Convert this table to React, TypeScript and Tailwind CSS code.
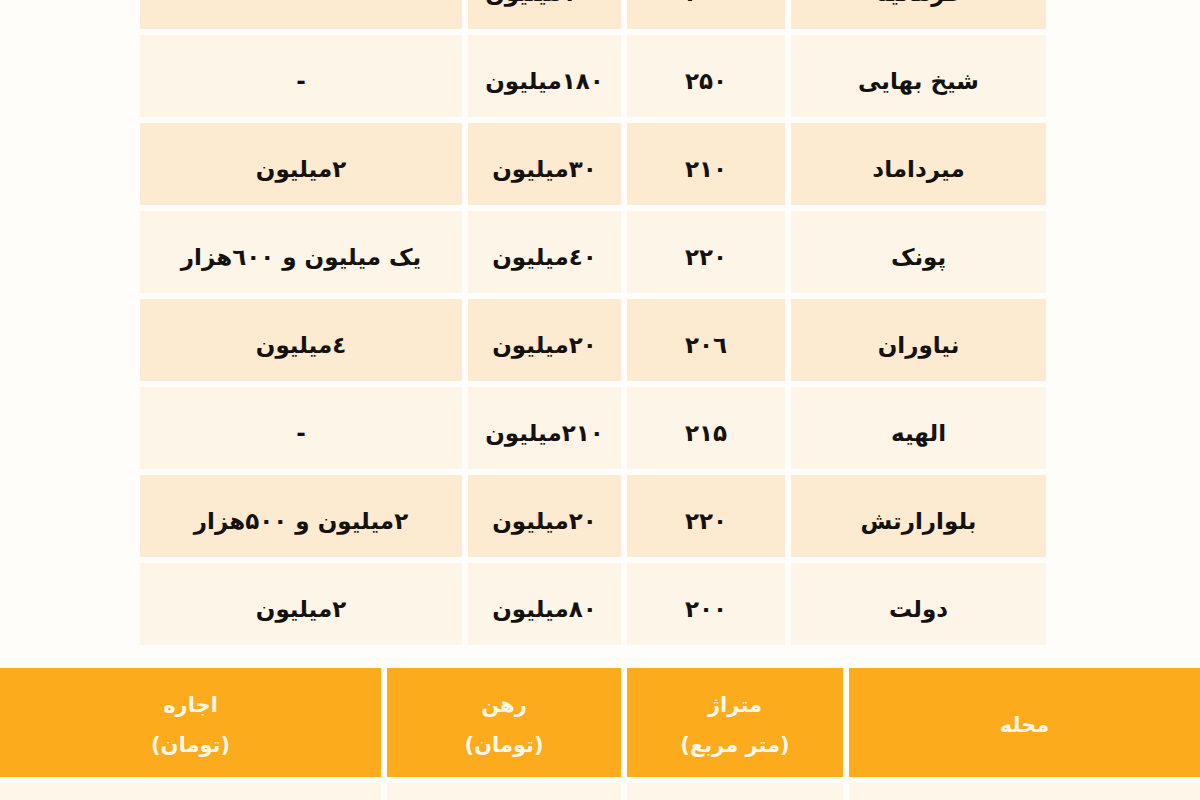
import React from 'react';

const rows = [
  { area: 'فرمانیه', size: '۳۰۰', deposit: '۱۰۰میلیون', rent: '-' },
  { area: 'شیخ بهایی', size: '۲۵۰', deposit: '۱۸۰میلیون', rent: '-' },
  { area: 'میرداماد', size: '۲۱۰', deposit: '۳۰میلیون', rent: '۲میلیون' },
  { area: 'پونک', size: '۲۲۰', deposit: '٤۰میلیون', rent: 'یک میلیون و ٦۰۰هزار' },
  { area: 'نیاوران', size: '۲۰٦', deposit: '۲۰میلیون', rent: '٤میلیون' },
  { area: 'الهیه', size: '۲۱۵', deposit: '۲۱۰میلیون', rent: '-' },
  { area: 'بلوارارتش', size: '۲۲۰', deposit: '۲۰میلیون', rent: '۲میلیون و ۵۰۰هزار' },
  { area: 'دولت', size: '۲۰۰', deposit: '۸۰میلیون', rent: '۲میلیون' },
];

const font = { fontFamily: '"DejaVu Sans", "Noto Sans", sans-serif' };

function Cell({ children, dark }: { children: React.ReactNode; dark: boolean }) {
  return (
    <div
      dir="rtl"
      className={`flex h-[82px] items-center justify-center pt-[10px] text-[23px] font-bold text-[#141210] ${dark ? 'bg-[#fcebd1]' : 'bg-[#fdf6e8]'}`}
    >
      {children}
    </div>
  );
}

function HeadCell({ top, bottom }: { top: string; bottom?: string }) {
  return (
    <div dir="rtl" className="flex flex-col items-center justify-center bg-[#fbab1b] pt-[4px] text-[21px] font-bold leading-[40px] text-[#fff8ea]">
      <span>{top}</span>
      {bottom && <span>{bottom}</span>}
    </div>
  );
}

export default function App() {
  return (
    <div className="flex h-[800px] w-[1200px] flex-col overflow-hidden bg-[#fffdf9]" style={font}>
      <div className="ml-[140px] mt-[-53px] grid w-[906px] shrink-0 grid-cols-[322px_153px_158px_255px] gap-[6px]">
        {rows.map((r, i) => (
          <React.Fragment key={i}>
            <Cell dark={i % 2 === 0}>{r.rent}</Cell>
            <Cell dark={i % 2 === 0}>{r.deposit}</Cell>
            <Cell dark={i % 2 === 0}>{r.size}</Cell>
            <Cell dark={i % 2 === 0}>{r.area}</Cell>
          </React.Fragment>
        ))}
      </div>

      <div className="mt-[23px] grid h-[109px] shrink-0 grid-cols-[381px_234px_216px_351px] gap-[6px]">
        <HeadCell top="اجاره" bottom="(تومان)" />
        <HeadCell top="رهن" bottom="(تومان)" />
        <HeadCell top="متراژ" bottom="(متر مربع)" />
        <HeadCell top="محله" />
      </div>

      <div className="mt-[6px] grid h-[40px] shrink-0 grid-cols-[381px_234px_216px_351px] gap-[6px]">
        <div className="bg-[#fdf6e9]" />
        <div className="bg-[#fdf6e9]" />
        <div className="bg-[#fdf6e9]" />
        <div className="bg-[#fdf6e9]" />
      </div>
    </div>
  );
}
